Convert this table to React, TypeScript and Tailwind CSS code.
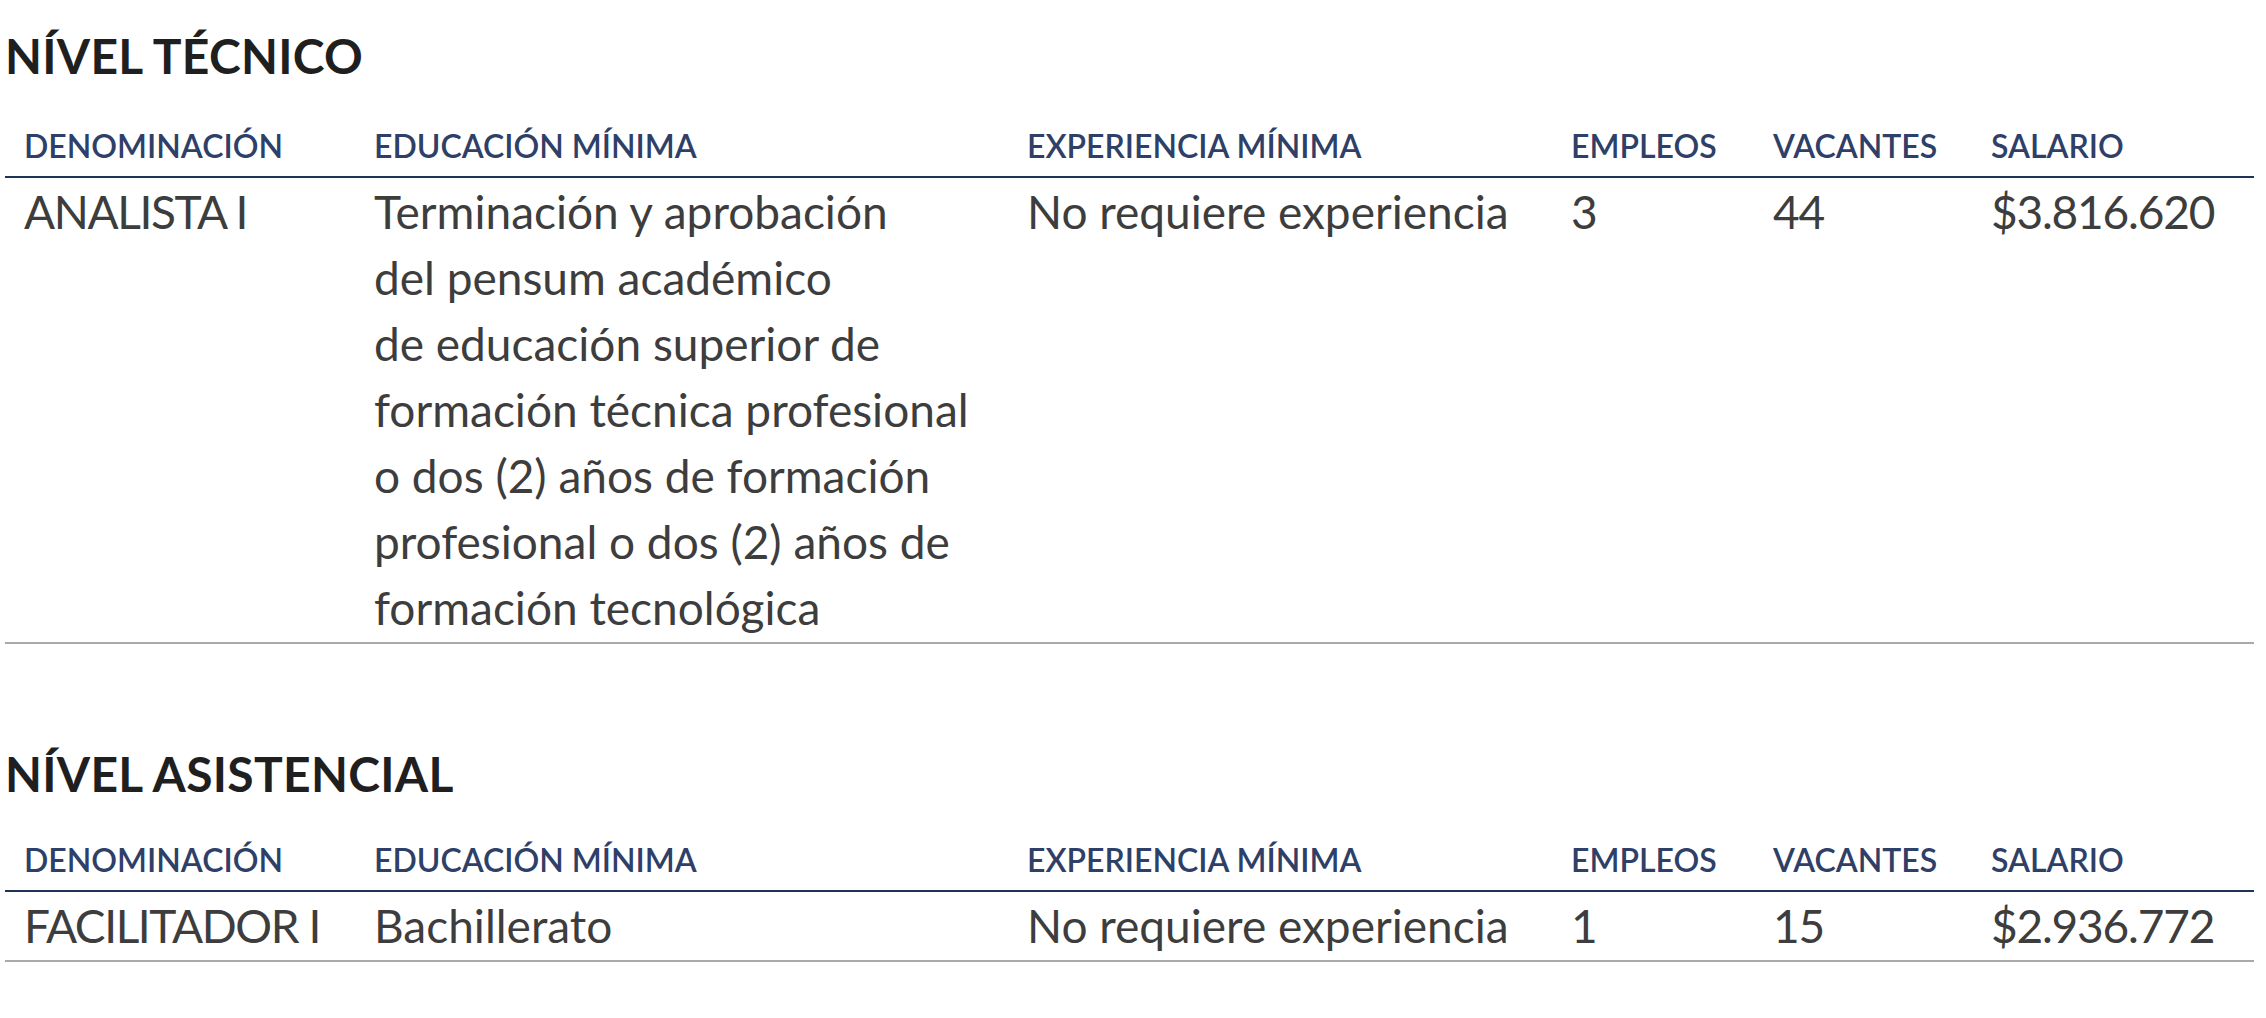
import React from "react";

type Row = {
  denominacion: string;
  educacion: string[];
  experiencia: string;
  empleos: string;
  vacantes: string;
  salario: string;
};

const headers = [
  "DENOMINACIÓN",
  "EDUCACIÓN MÍNIMA",
  "EXPERIENCIA MÍNIMA",
  "EMPLEOS",
  "VACANTES",
  "SALARIO",
];

function Section({ title, rows, first }: { title: string; rows: Row[]; first?: boolean }) {
  return (
    <section className={first ? "pt-[28px]" : "pt-[102px]"}>
      <h2
        className={
          "text-[48px] leading-[56px] font-bold tracking-[0.3px] text-[#1f1f1f] " +
          (first ? "mb-[44px]" : "mb-[40px]")
        }
      >
        {title}
      </h2>
      <div className="grid grid-cols-[350px_653px_544px_202px_218px_1fr]">
        {headers.map((h) => (
          <div
            key={h}
            className="pl-[19px] pb-[13px] text-[32px] leading-[35px] font-semibold text-[#2e4068] border-b-2 border-[#1f3359]"
          >
            {h}
          </div>
        ))}
        {rows.map((r) => (
          <React.Fragment key={r.denominacion}>
            <div className="pl-[19px] pt-[1px] pb-[1px] tracking-[-1.4px] border-b-2 border-[#a9a9a9]">{r.denominacion}</div>
            <div className="pl-[19px] pt-[1px] pb-[1px] border-b-2 border-[#a9a9a9]">
              {r.educacion.map((l, i) => (
                <div key={i}>{l}</div>
              ))}
            </div>
            <div className="pl-[19px] pt-[1px] pb-[1px] border-b-2 border-[#a9a9a9]">{r.experiencia}</div>
            <div className="pl-[19px] pt-[1px] pb-[1px] tracking-[-1.2px] border-b-2 border-[#a9a9a9]">{r.empleos}</div>
            <div className="pl-[19px] pt-[1px] pb-[1px] tracking-[-1.2px] border-b-2 border-[#a9a9a9]">{r.vacantes}</div>
            <div className="pl-[19px] pt-[1px] pb-[1px] tracking-[-1.2px] border-b-2 border-[#a9a9a9]">{r.salario}</div>
          </React.Fragment>
        ))}
      </div>
    </section>
  );
}

export default function App() {
  const tecnico: Row[] = [
    {
      denominacion: "ANALISTA I",
      educacion: [
        "Terminación y aprobación",
        "del pensum académico",
        "de educación superior de",
        "formación técnica profesional",
        "o dos (2) años de formación",
        "profesional o dos (2) años de",
        "formación tecnológica",
      ],
      experiencia: "No requiere experiencia",
      empleos: "3",
      vacantes: "44",
      salario: "$3.816.620",
    },
  ];
  const asistencial: Row[] = [
    {
      denominacion: "FACILITADOR I",
      educacion: ["Bachillerato"],
      experiencia: "No requiere experiencia",
      empleos: "1",
      vacantes: "15",
      salario: "$2.936.772",
    },
  ];
  return (
    <div className="min-h-[1018px] w-full bg-white pl-[5px] pr-[12px] font-['Lato',sans-serif] text-[46px] leading-[66px] text-[#3d3d3d]">
      <Section title="NÍVEL TÉCNICO" rows={tecnico} first />
      <Section title="NÍVEL ASISTENCIAL" rows={asistencial} />
    </div>
  );
}
